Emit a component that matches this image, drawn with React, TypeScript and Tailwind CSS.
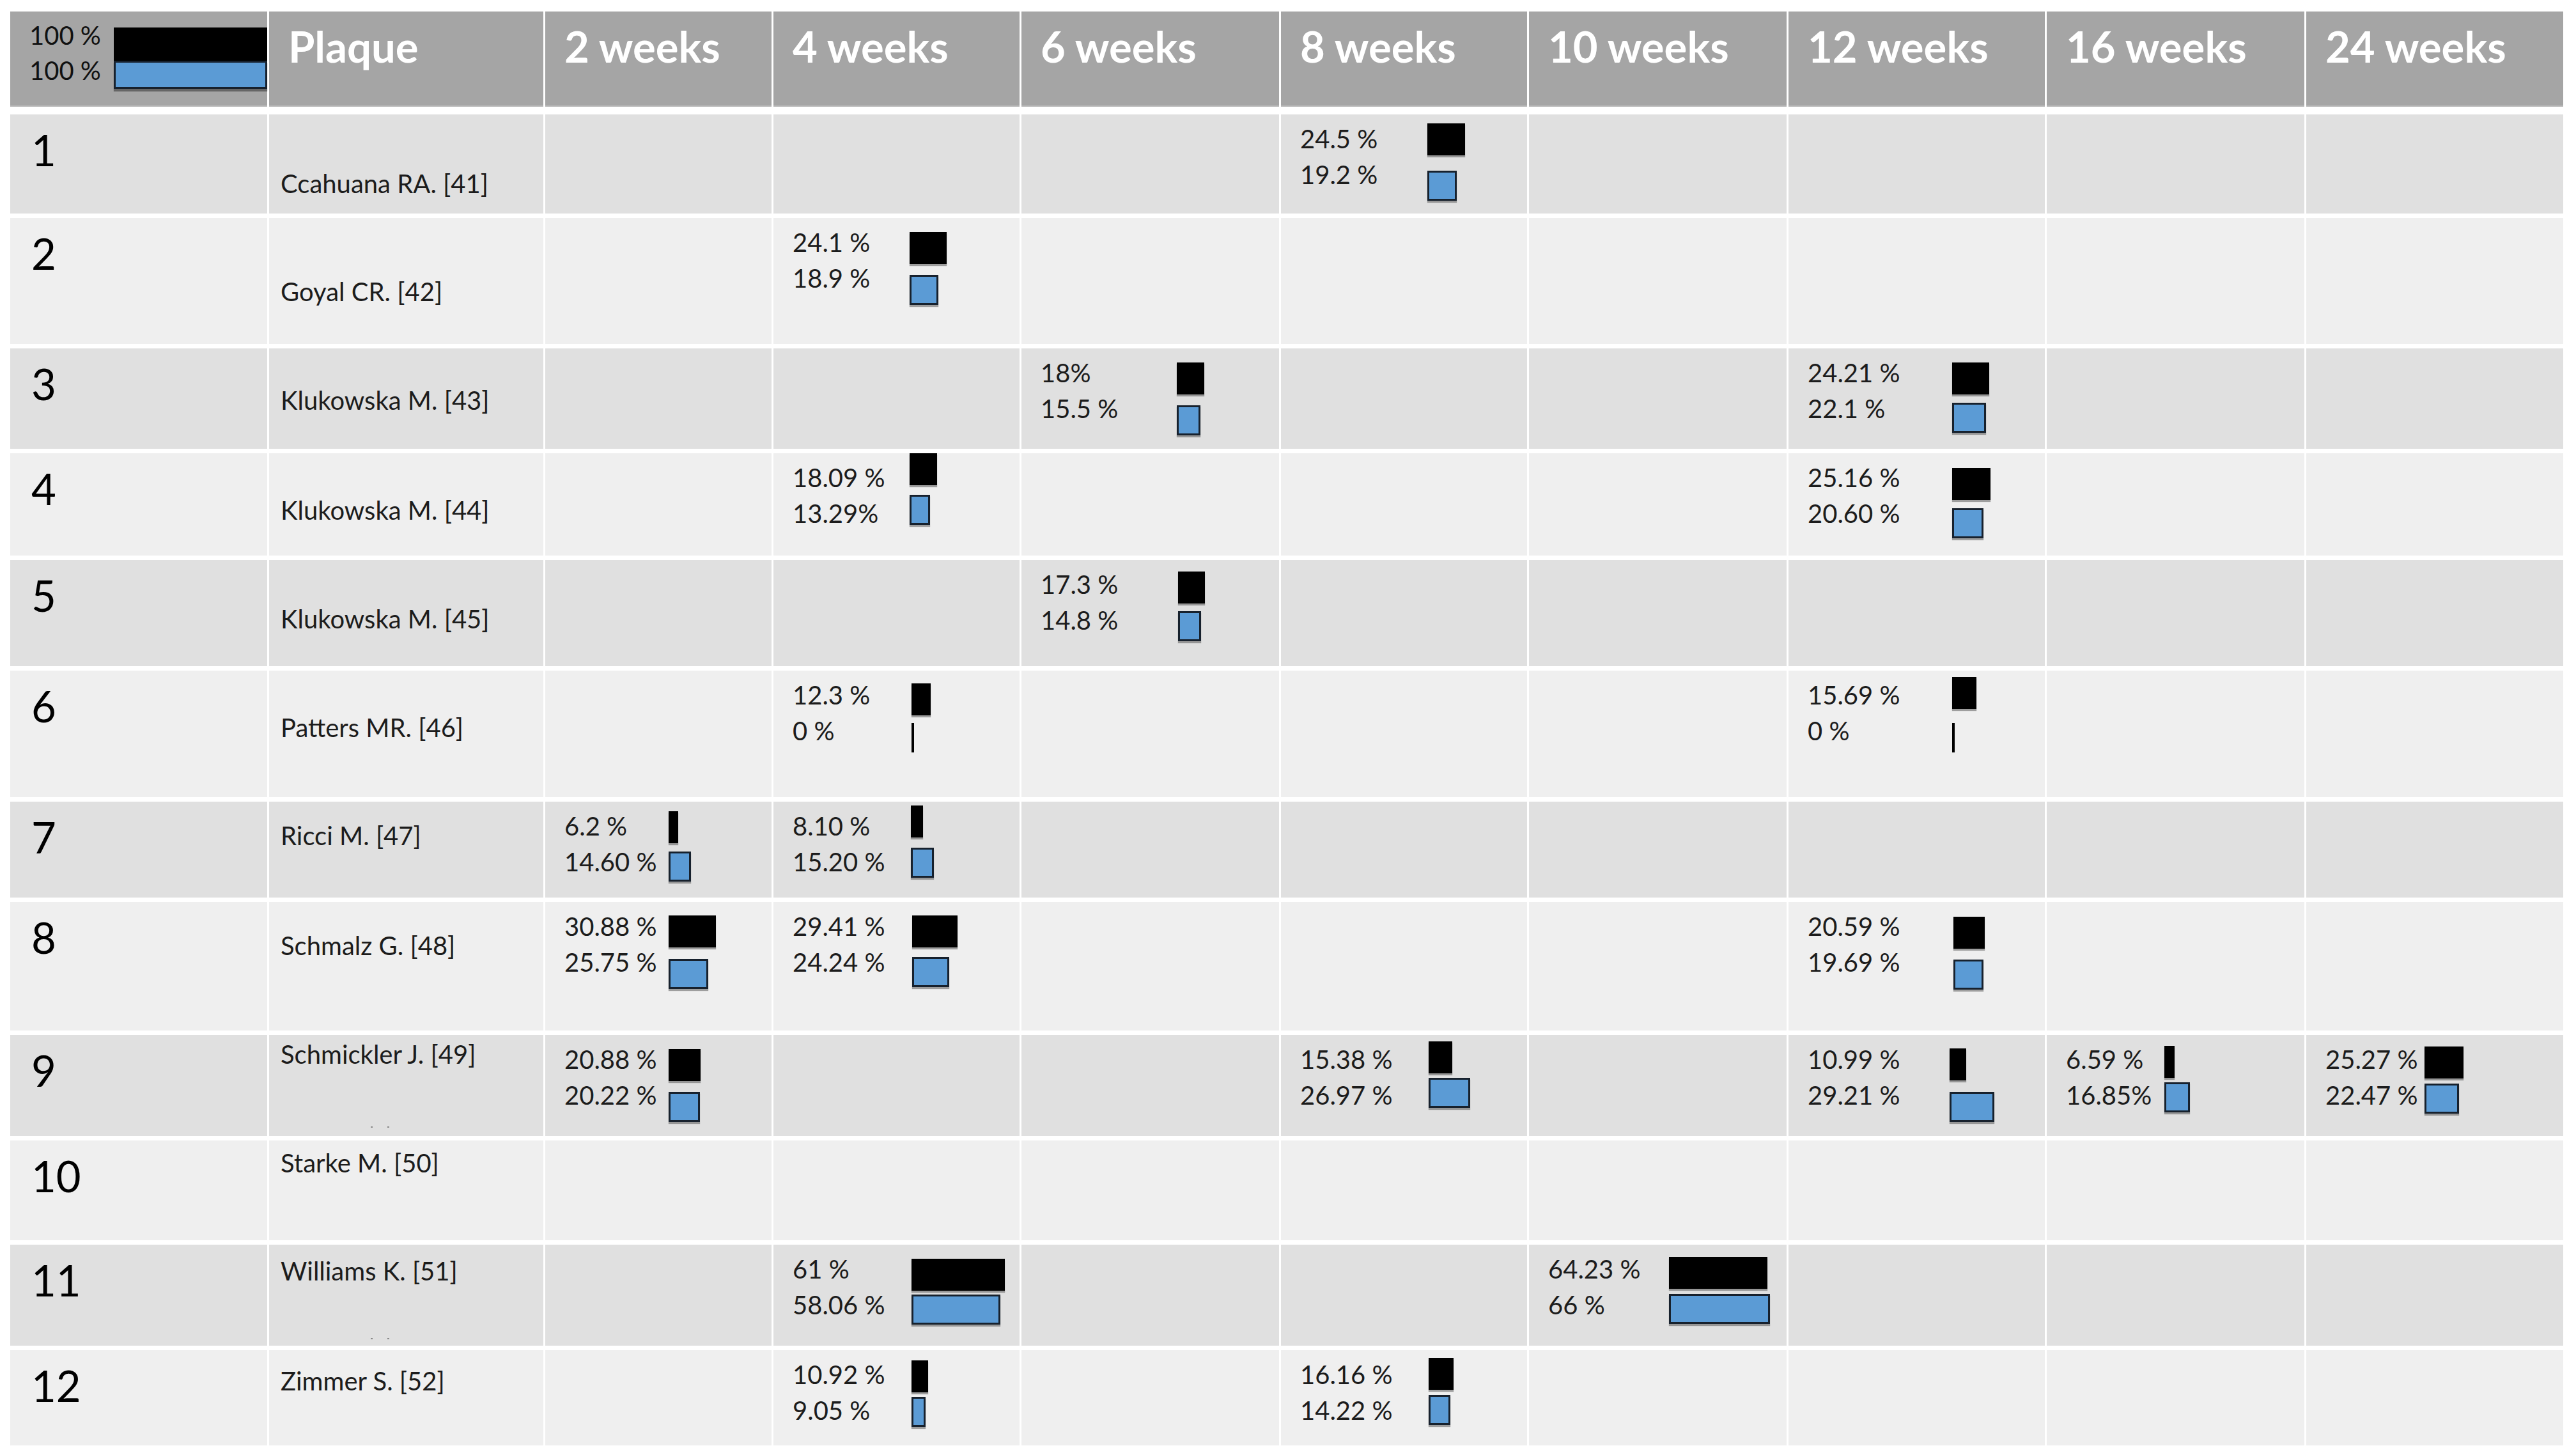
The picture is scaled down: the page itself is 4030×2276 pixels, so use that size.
import React from "react";

const GRID =
  "grid grid-cols-[402px_429px_354px_385px_403px_385px_403px_401px_403px_402px] gap-x-[3px]";

type Cell = {
  a: string;
  b: string;
  pa: number;
  pb: number;
  w: string;
  t: string;
  g: string;
};

type Row = {
  n: string;
  name: string;
  h: string;
  np: string;
  bg: string;
  dots?: string;
  cells: Record<number, Cell>;
};

const ODD = "bg-[#e0e0e0]";
const EVEN = "bg-[#efefef]";

const rows: Row[] = [
  {
    n: "1",
    name: "Ccahuana RA. [41]",
    h: "h-[155px]",
    np: "pt-[80px]",
    bg: ODD,
    cells: {
      5: { a: "24.5 %", b: "19.2 %", pa: 24.5, pb: 19.2, w: "w-[229px]", t: "pt-[14px]", g: "gap-[24px]" },
    },
  },
  {
    n: "2",
    name: "Goyal CR. [42]",
    h: "h-[197px]",
    np: "pt-[87px]",
    bg: EVEN,
    cells: {
      3: { a: "24.1 %", b: "18.9 %", pa: 24.1, pb: 18.9, w: "w-[213px]", t: "pt-[22px]", g: "gap-[17px]" },
    },
  },
  {
    n: "3",
    name: "Klukowska M. [43]",
    h: "h-[157px]",
    np: "pt-[53px]",
    bg: ODD,
    cells: {
      4: { a: "18%", b: "15.5 %", pa: 18, pb: 15.5, w: "w-[243px]", t: "pt-[22px]", g: "gap-[17px]" },
      7: { a: "24.21 %", b: "22.1 %", pa: 24.21, pb: 22.1, w: "w-[256px]", t: "pt-[22px]", g: "gap-[13px]" },
    },
  },
  {
    n: "4",
    name: "Klukowska M. [44]",
    h: "h-[160px]",
    np: "pt-[61px]",
    bg: EVEN,
    cells: {
      3: { a: "18.09 %", b: "13.29%", pa: 18.09, pb: 13.29, w: "w-[213px]", t: "pt-[0px]", g: "gap-[15px]" },
      7: { a: "25.16 %", b: "20.60 %", pa: 25.16, pb: 20.6, w: "w-[256px]", t: "pt-[23px]", g: "gap-[13px]" },
    },
  },
  {
    n: "5",
    name: "Klukowska M. [45]",
    h: "h-[166px]",
    np: "pt-[64px]",
    bg: ODD,
    cells: {
      4: { a: "17.3 %", b: "14.8 %", pa: 17.3, pb: 14.8, w: "w-[245px]", t: "pt-[18px]", g: "gap-[12px]" },
    },
  },
  {
    n: "6",
    name: "Patters MR. [46]",
    h: "h-[198px]",
    np: "pt-[61px]",
    bg: EVEN,
    cells: {
      3: { a: "12.3 %", b: "0 %", pa: 12.3, pb: 0, w: "w-[216px]", t: "pt-[20px]", g: "gap-[12px]" },
      7: { a: "15.69 %", b: "0 %", pa: 15.69, pb: 0, w: "w-[256px]", t: "pt-[10px]", g: "gap-[22px]" },
    },
  },
  {
    n: "7",
    name: "Ricci M. [47]",
    h: "h-[150px]",
    np: "pt-[25px]",
    bg: ODD,
    cells: {
      2: { a: "6.2 %", b: "14.60 %", pa: 6.2, pb: 14.6, w: "w-[193px]", t: "pt-[15px]", g: "gap-[13px]" },
      3: { a: "8.10 %", b: "15.20 %", pa: 8.1, pb: 15.2, w: "w-[215px]", t: "pt-[6px]", g: "gap-[16px]" },
    },
  },
  {
    n: "8",
    name: "Schmalz G. [48]",
    h: "h-[201px]",
    np: "pt-[40px]",
    bg: EVEN,
    cells: {
      2: { a: "30.88 %", b: "25.75 %", pa: 30.88, pb: 25.75, w: "w-[193px]", t: "pt-[21px]", g: "gap-[18px]" },
      3: { a: "29.41 %", b: "24.24 %", pa: 29.41, pb: 24.24, w: "w-[217px]", t: "pt-[21px]", g: "gap-[15px]" },
      7: { a: "20.59 %", b: "19.69 %", pa: 20.59, pb: 19.69, w: "w-[258px]", t: "pt-[23px]", g: "gap-[17px]" },
    },
  },
  {
    n: "9",
    name: "Schmickler J. [49]",
    h: "h-[158px]",
    np: "pt-[2px]",
    bg: ODD,
    dots: "mb-[13px]",
    cells: {
      2: { a: "20.88 %", b: "20.22 %", pa: 20.88, pb: 20.22, w: "w-[193px]", t: "pt-[22px]", g: "gap-[17px]" },
      5: { a: "15.38 %", b: "26.97 %", pa: 15.38, pb: 26.97, w: "w-[231px]", t: "pt-[10px]", g: "gap-[7px]" },
      7: { a: "10.99 %", b: "29.21 %", pa: 10.99, pb: 29.21, w: "w-[252px]", t: "pt-[21px]", g: "gap-[18px]" },
      8: { a: "6.59 %", b: "16.85%", pa: 6.59, pb: 16.85, w: "w-[184px]", t: "pt-[17px]", g: "gap-[7px]" },
      9: { a: "25.27 %", b: "22.47 %", pa: 25.27, pb: 22.47, w: "w-[185px]", t: "pt-[18px]", g: "gap-[8px]" },
    },
  },
  {
    n: "10",
    name: "Starke M. [50]",
    h: "h-[156px]",
    np: "pt-[7px]",
    bg: EVEN,
    cells: {},
  },
  {
    n: "11",
    name: "Williams K. [51]",
    h: "h-[158px]",
    np: "pt-[13px]",
    bg: ODD,
    dots: "mb-[10px]",
    cells: {
      3: { a: "61 %", b: "58.06 %", pa: 61, pb: 58.06, w: "w-[216px]", t: "pt-[22px]", g: "gap-[6px]" },
      6: { a: "64.23 %", b: "66 %", pa: 64.23, pb: 66, w: "w-[219px]", t: "pt-[19px]", g: "gap-[8px]" },
    },
  },
  {
    n: "12",
    name: "Zimmer S. [52]",
    h: "h-[149px]",
    np: "pt-[20px]",
    bg: EVEN,
    cells: {
      3: { a: "10.92 %", b: "9.05 %", pa: 10.92, pb: 9.05, w: "w-[216px]", t: "pt-[16px]", g: "gap-[7px]" },
      5: { a: "16.16 %", b: "14.22 %", pa: 16.16, pb: 14.22, w: "w-[231px]", t: "pt-[12px]", g: "gap-[8px]" },
    },
  },
];

const headers = [
  "Plaque",
  "2 weeks",
  "4 weeks",
  "6 weeks",
  "8 weeks",
  "10 weeks",
  "12 weeks",
  "16 weeks",
  "24 weeks",
];

function BlackBar({ pct }: { pct: number }) {
  return (
    <div
      className="h-[50px] bg-black shadow-[0_3px_1px_rgba(60,60,60,0.45)]"
      style={{ width: Math.max(pct * 2.4, 4) }}
    />
  );
}

function BlueBar({ pct }: { pct: number }) {
  if (pct === 0) {
    return <div className="h-[46px] w-[4px] bg-black" />;
  }
  return (
    <div
      className="h-[47px] border-[3px] border-[#17212d] bg-[#5b9bd5] shadow-[0_3px_1px_rgba(60,60,60,0.45)]"
      style={{ width: pct * 2.4 }}
    />
  );
}

function ValueCell({ cell, bg }: { cell?: Cell; bg: string }) {
  if (!cell) return <div className={bg} />;
  return (
    <div className={`flex ${bg}`}>
      <div
        className={`${cell.w} shrink-0 whitespace-nowrap pl-[30px] pt-[10px] text-[40px] leading-[56px] text-[#1c1c1c]`}
      >
        <div>{cell.a}</div>
        <div>{cell.b}</div>
      </div>
      <div className={`flex flex-col ${cell.t} ${cell.g}`}>
        <BlackBar pct={cell.pa} />
        <BlueBar pct={cell.pb} />
      </div>
    </div>
  );
}

export default function App() {
  return (
    <div className="h-[2276px] w-[4030px] bg-white pl-[16px] pt-[18px] font-['Lato','Carlito','Liberation_Sans',sans-serif]">
      <div className="flex w-[3994px] flex-col">
        {/* header */}
        <div className={`${GRID} h-[149px] mb-[12px]`}>
          <div className="flex border-b-[2px] border-[#bcbcbc] bg-[#a5a5a5]">
            <div className="w-[162px] shrink-0 whitespace-nowrap pl-[30px] pt-[10px] text-[40px] leading-[55px] text-[#111]">
              <div>100 %</div>
              <div>100 %</div>
            </div>
            <div className="flex flex-col pt-[25px]">
              <div className="h-[52px] w-[240px] bg-black" />
              <div className="h-[44px] w-[240px] border-[3px] border-[#17212d] bg-[#5b9bd5] shadow-[0_4px_1px_rgba(60,60,60,0.6)]" />
            </div>
          </div>
          {headers.map((h) => (
            <div
              key={h}
              className="whitespace-nowrap border-b-[2px] border-[#bcbcbc] bg-[#a5a5a5] pl-[30px] pt-[21px] text-[67px] font-bold leading-none text-white"
            >
              {h}
            </div>
          ))}
        </div>

        {/* body */}
        <div className="flex flex-col gap-y-[7px]">
          {rows.map((r) => (
            <div key={r.n} className={`${GRID} ${r.h}`}>
              <div className={`${r.bg} pl-[33px] pt-[22px] text-[67px] leading-none text-black`}>
                {r.n}
              </div>
              <div className={`${r.bg} flex flex-col pl-[18px]`}>
                <div className={`${r.np} whitespace-nowrap text-[40px] leading-[56px] text-[#1c1c1c]`}>
                  {r.name}
                </div>
                {r.dots && (
                  <div className={`mt-auto flex gap-x-[23px] pl-[141px] ${r.dots}`}>
                    <span className="h-[2px] w-[3px] bg-[#8a8a8a]" />
                    <span className="h-[2px] w-[3px] bg-[#8a8a8a]" />
                  </div>
                )}
              </div>
              {[2, 3, 4, 5, 6, 7, 8, 9].map((c) => (
                <ValueCell key={c} cell={r.cells[c]} bg={r.bg} />
              ))}
            </div>
          ))}
        </div>
      </div>
    </div>
  );
}
